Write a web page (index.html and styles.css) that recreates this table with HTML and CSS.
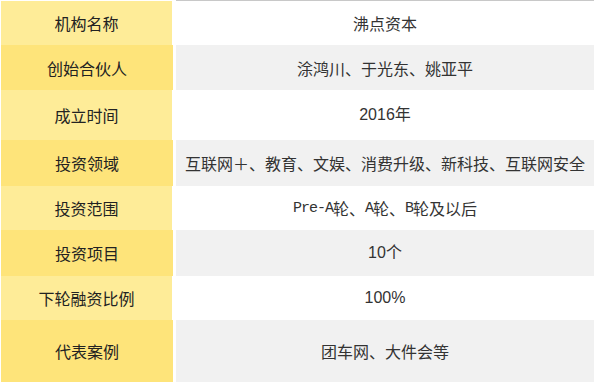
FILE: index.html
```html
<!DOCTYPE html>
<html lang="zh-CN">
<head>
    <meta charset="UTF-8">
    <title>沸点资本</title>
    <link rel="stylesheet" href="styles.css">
</head>
<body>
    <div class="info-table">
        <div class="row row-first">
            <div class="label light">机构名称</div>
            <div class="value">沸点资本</div>
        </div>
        <div class="row">
            <div class="label dark">创始合伙人</div>
            <div class="value gray">涂鸿川、于光东、姚亚平</div>
        </div>
        <div class="row row-tall">
            <div class="label light">成立时间</div>
            <div class="value latin">2016年</div>
        </div>
        <div class="row row-mid">
            <div class="label dark">投资领域</div>
            <div class="value gray">互联网＋、教育、文娱、消费升级、新科技、互联网安全</div>
        </div>
        <div class="row row-short">
            <div class="label light">投资范围</div>
            <div class="value"><span class="mono">Pre-A</span>轮、<span class="mono">A</span>轮、<span class="mono">B</span>轮及以后</div>
        </div>
        <div class="row row-mid">
            <div class="label dark">投资项目</div>
            <div class="value gray latin">10个</div>
        </div>
        <div class="row row-short">
            <div class="label light">下轮融资比例</div>
            <div class="value latin">100%</div>
        </div>
        <div class="row row-last">
            <div class="label dark">代表案例</div>
            <div class="value gray">团车网、大件会等</div>
        </div>
    </div>
</body>
</html>
```

FILE: styles.css
```css
body {
    margin: 0;
    background: #fff;
    font-family: "Noto Sans CJK SC", "Liberation Sans", sans-serif;
    font-size: 16px;
    color: #333;
}

.info-table {
    width: 594px;
    padding-left: 1px;
}

.row {
    display: grid;
    grid-template-columns: 172px 419px;
    column-gap: 2px;
    height: 45px;
}

.row-tall { height: 50px; }
.row-mid { height: 46px; }
.row-short { height: 44px; }
.row-last { height: 62px; }

.label,
.value {
    display: flex;
    align-items: center;
    justify-content: center;
    line-height: 1;
}

.label {
    color: #222;
}

.light {
    background: #feec98;
    margin-right: 1px;
}

.dark {
    background: #fee47a;
}

.value {
    margin-left: 1px;
    color: #333;
}

.gray {
    background: #f1f1f1;
}

.row-first .label {
    border-top: 1px solid #fff;
}

.row-first .value {
    border-top: 1px solid #c8c8c8;
}

.latin {
    font-family: "Liberation Sans", "Noto Sans CJK SC", sans-serif;
}

.mono {
    font-family: "Liberation Mono", monospace;
    font-size: 15px;
    letter-spacing: -1px;
}
```
